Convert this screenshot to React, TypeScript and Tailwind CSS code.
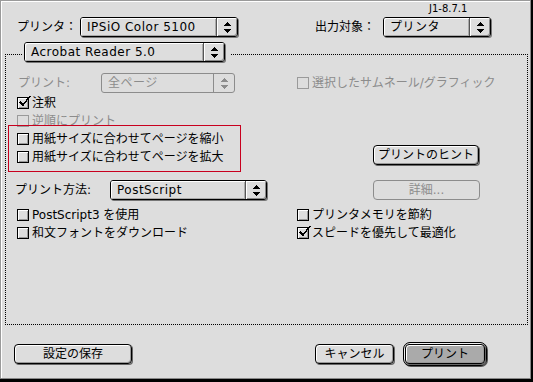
import React from "react";

const FONT = { fontFamily: '"DejaVu Sans", "Noto Sans CJK JP", sans-serif' };

function Arrows({ disabled }: { disabled?: boolean }) {
  const c = disabled ? "#8c8c8c" : "#000";
  return (
    <svg width="7" height="11" viewBox="0 0 7 11" shapeRendering="crispEdges">
      <polygon points="3.5,0 7,4 0,4" fill={c} />
      <polygon points="0,7 7,7 3.5,11" fill={c} />
    </svg>
  );
}

function Popup({
  label,
  width,
  disabled,
}: {
  label: string;
  width: number;
  disabled?: boolean;
}) {
  return (
    <div
      className={
        "flex h-[20px] shrink-0 rounded-[3px] border " +
        (disabled
          ? "border-[#8c8c8c] text-[#8c8c8c]"
          : "border-black text-black shadow-[1px_1px_0_#777]")
      }
      style={{ width }}
    >
      <div
        className={
          "flex-1 rounded-l-[2px] pl-[6px] text-[12px] leading-[18px] tracking-[0.5px] " +
          (disabled ? "" : "shadow-[inset_1px_1px_0_#fff,inset_-1px_-1px_0_#aaa]")
        }
      >
        {label}
      </div>
      <div
        className={
          "flex w-[21px] items-center justify-center rounded-r-[2px] border-l " +
          (disabled
            ? "border-[#8c8c8c]"
            : "border-[#555] shadow-[inset_1px_1px_0_#fff,inset_-1px_-1px_0_#888]")
        }
      >
        <Arrows disabled={disabled} />
      </div>
    </div>
  );
}

function Check({
  label,
  checked,
  disabled,
}: {
  label: string;
  checked?: boolean;
  disabled?: boolean;
}) {
  return (
    <div className="flex h-[18px] items-center">
      <span
        className={
          "relative h-[12px] w-[12px] shrink-0 border " +
          (disabled
            ? "border-[#9a9a9a]"
            : "border-black shadow-[inset_1px_1px_0_#fff,inset_-1px_-1px_0_#999]")
        }
      >
        {checked && (
          <svg
            className="absolute left-[1px] top-[-3px]"
            width="13"
            height="13"
            viewBox="0 0 13 13"
            shapeRendering="crispEdges"
          >
            <path d="M1 7 L4 10 L11 1" stroke="#000" strokeWidth="1.5" fill="none" />
          </svg>
        )}
      </span>
      <span
        className={
          "ml-[3px] whitespace-nowrap text-[12px] leading-[14px] " +
          (disabled ? "text-[#8c8c8c]" : "text-black")
        }
      >
        {label}
      </span>
    </div>
  );
}

function Button({
  label,
  width,
  disabled,
}: {
  label: string;
  width: number;
  disabled?: boolean;
}) {
  return (
    <div
      className={
        "flex h-[20px] shrink-0 items-center justify-center rounded-[4px] border text-[12px] " +
        (disabled
          ? "border-[#8c8c8c] text-[#8c8c8c]"
          : "border-black text-black shadow-[1px_1px_0_#666,inset_1px_1px_0_#fff,inset_-1px_-1px_0_#999]")
      }
      style={{ width }}
    >
      {label}
    </div>
  );
}

export default function App() {
  return (
    <div
      className="relative flex h-[382px] w-[533px] flex-col overflow-hidden bg-[#dddddd] shadow-[inset_-2px_-3px_0_#000,inset_-3px_-4px_0_#888,inset_1px_1px_0_#9a9a9a,inset_2px_2px_0_#fff]"
      style={FONT}
    >
      {/* version */}
      <div className="h-[17px] pl-[429px] pt-[4px] text-[10px] leading-[10px] text-black">
        J1-8.7.1
      </div>

      {/* printer / destination */}
      <div className="flex h-[20px] items-center">
        <span className="ml-[17px] w-[63px] text-[12px] leading-[14px]">プリンタ：</span>
        <Popup label="IPSiO Color 5100" width={158} />
        <span className="ml-[77px] w-[68px] text-[12px] leading-[14px]">出力対象：</span>
        <Popup label="プリンタ" width={108} />
      </div>

      {/* group box */}
      <div className="relative ml-[5px] mt-[17px] h-[271px] w-[523px] border border-dotted border-black pt-[18px]">
        <div className="absolute left-[16px] top-[-13px] bg-[#dddddd] pl-[2px] pr-[5px]">
          <Popup label="Acrobat Reader 5.0" width={201} />
        </div>

        <div className="flex h-[20px] items-center">
          <div className="flex w-[291px] items-center">
            <span className="w-[95px] pl-[12px] text-[12px] leading-[14px] text-[#8c8c8c]">
              プリント:
            </span>
            <Popup label="全ページ" width={134} disabled />
          </div>
          <Check label="選択したサムネール/グラフィック" disabled />
        </div>

        <div className="mt-[1px] pl-[11px]">
          <Check label="注釈" checked />
          <Check label="逆順にプリント" disabled />
          <Check label="用紙サイズに合わせてページを縮小" />
        </div>
        <div className="flex h-[18px] items-center">
          <div className="w-[291px] pl-[11px]">
            <Check label="用紙サイズに合わせてページを拡大" />
          </div>
          <div className="ml-[76px] self-start -mt-[3px]">
            <Button label="プリントのヒント" width={106} />
          </div>
        </div>

        <div className="mt-[14px] flex h-[20px] items-center">
          <div className="flex w-[291px] items-center">
            <span className="w-[104px] pl-[9px] text-[12px] leading-[14px]">プリント方法:</span>
            <Popup label="PostScript" width={157} />
          </div>
          <div className="ml-[76px]">
            <Button label="詳細..." width={107} disabled />
          </div>
        </div>

        <div className="mt-[6px] flex">
          <div className="w-[291px] pl-[11px]">
            <Check label="PostScript3 を使用" />
            <Check label="和文フォントをダウンロード" />
          </div>
          <div>
            <Check label="プリンタメモリを節約" />
            <Check label="スピードを優先して最適化" checked />
          </div>
        </div>

        {/* annotation highlight */}
        <div className="pointer-events-none absolute left-[2px] top-[70px] h-[47px] w-[233px] border border-[#c8001e]" />
      </div>

      {/* bottom buttons */}
      <div className="mt-[16px] flex h-[25px] items-center">
        <div className="ml-[14px]">
          <Button label="設定の保存" width={118} />
        </div>
        <div className="ml-[183px]">
          <Button label="キャンセル" width={79} />
        </div>
        <div className="ml-[9px] rounded-[7px] border border-black bg-[#aaaaaa] p-[1px] shadow-[1px_1px_0_#555,inset_1px_1px_0_#eee]">
          <Button label="プリント" width={80} />
        </div>
      </div>
    </div>
  );
}
